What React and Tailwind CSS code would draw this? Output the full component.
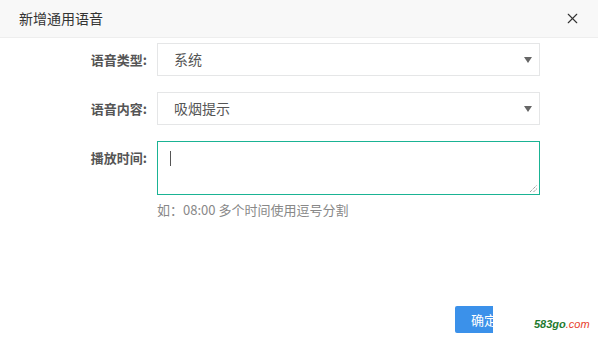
import { X } from 'lucide-react';

const font = { fontFamily: '"Microsoft YaHei", "Noto Sans CJK SC", "Liberation Sans", sans-serif' };

const SelectRow = ({ label, value }) => (
  <div className="flex items-center h-[33px]">
    <label className="w-[149px] pr-[2px] text-right text-[13px] font-bold text-[#555]">{label}</label>
    <div className="ml-[8px] w-[383px] h-[33px] border border-[#e5e6e7] bg-white flex items-center justify-between pl-[16px] pr-[7px]">
      <span className="text-[14px] text-[#555]">{value}</span>
      <svg width="8" height="6" viewBox="0 0 8 6">
        <path d="M0 0H8L4 6Z" fill="#666" />
      </svg>
    </div>
  </div>
);

export default function App() {
  return (
    <div className="w-[598px] h-[343px] bg-white relative overflow-hidden" style={font}>
      <div className="h-[38px] bg-[#f8f8f8] border-b border-[#eee] flex items-center justify-between pl-[19px] pr-[17px]">
        <span className="text-[14px] text-[#333]">新增通用语音</span>
        <X size={17} strokeWidth={1.6} color="#333" />
      </div>

      <div className="pt-[5px] flex flex-col">
        <SelectRow label="语音类型:" value="系统" />
        <div className="h-[16px]" />
        <SelectRow label="语音内容:" value="吸烟提示" />
        <div className="h-[16px]" />
        <div className="flex items-start">
          <label className="w-[149px] pr-[2px] pt-[7px] text-right text-[13px] font-bold text-[#555]">播放时间:</label>
          <div className="ml-[8px] flex flex-col">
            <div className="w-[383px] h-[54px] border border-[#1ab394] bg-white relative">
              <div className="absolute left-[12px] top-[9px] w-[1px] h-[15px] bg-[#555]" />
              <svg className="absolute right-[1px] bottom-[1px]" width="9" height="9" viewBox="0 0 9 9">
                <path d="M1 8L8 1M4.5 8L8 4.5" stroke="#777" strokeWidth="1" strokeDasharray="1 1" />
              </svg>
            </div>
            <span className="mt-[5px] text-[13px] text-[#888]">如：08:00 多个时间使用逗号分割</span>
          </div>
        </div>
      </div>

      <div className="absolute left-[455px] top-[306px] w-[38px] h-[27px] overflow-hidden">
        <div className="w-[60px] h-[27px] bg-[#3b91ea] rounded-[2px] flex items-center pl-[16px] text-[13px] text-white">
          确定
        </div>
      </div>

      <div className="absolute left-[534px] top-[319px] text-[11px] italic font-bold leading-none" style={{ fontFamily: '"Liberation Sans", Arial, sans-serif' }}>
        <span className="text-[#1e7a2e]">583go</span>
        <span className="text-[#e8412c] font-normal">.com</span>
      </div>
    </div>
  );
}
